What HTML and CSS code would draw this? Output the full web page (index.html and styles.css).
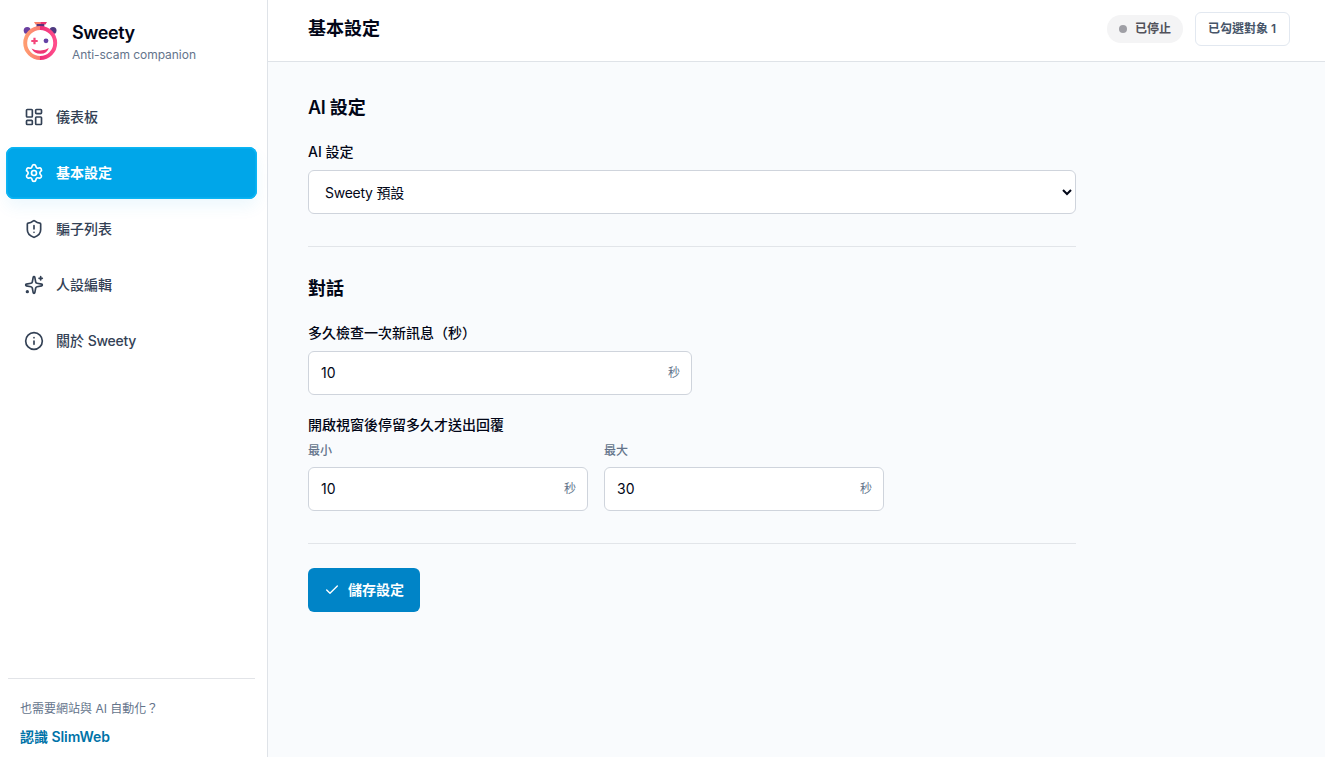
FILE: index.html
```html
<!DOCTYPE html>
<html lang="zh-Hant">
<head>
<meta charset="utf-8">
<title>Sweety</title>
<link rel="stylesheet" href="styles.css">
</head>
<body>
<div class="app">
  <aside class="sidebar">
    <div class="brand">
      <svg class="logo" viewBox="0 0 40 40">
        <defs>
          <linearGradient id="ring" x1="0" x2="1" y1="0" y2="0">
            <stop offset="0" stop-color="#ff9c70"/><stop offset=".49" stop-color="#fb7a72"/>
            <stop offset=".51" stop-color="#ef2f78"/><stop offset="1" stop-color="#ff4d8b"/>
          </linearGradient>
        </defs>
        <circle cx="7.200" cy="10.400" r="3.500" fill="#6b3fa0"/>
        <circle cx="33" cy="10.400" r="3.500" fill="#4d3a80"/>
        <path d="M14 2h6.300v2.500H15.500z" fill="#fb8068"/><path d="M20.300 2H27l-1.500 2.500h-5.200z" fill="#e8336f"/>
        <path d="M16.500 4h7.800v4h-7.800z" fill="#593279"/>
        <circle cx="20.200" cy="23" r="15" fill="#fff" stroke="url(#ring)" stroke-width="3.900"/>
        <path d="M14.500 17.800v6.400M11.300 21h6.400" stroke="#f3467b" stroke-width="2.200"/>
        <circle cx="26" cy="20.800" r="2.400" fill="#6341a5"/>
        <path d="M11.500 28.500q4 2.200 9 1.900t8.300-2.500q-1.500 5.600-8.300 5.900-6.300 0-9-5.300z" fill="#ef3875"/>
      </svg>
      <div class="brand-copy">
        <div class="brand-name">Sweety</div>
        <div class="brand-sub">Anti-scam companion</div>
      </div>
    </div>
    <nav class="nav">
      <a class="nav-item"><svg class="icon" viewBox="0 0 24 24"><rect x="3" y="3" width="7" height="9" rx="1"/><rect x="14" y="3" width="7" height="5" rx="1"/><rect x="14" y="12" width="7" height="9" rx="1"/><rect x="3" y="16" width="7" height="5" rx="1"/></svg><span>儀表板</span></a>
      <a class="nav-item active"><svg class="icon" viewBox="0 0 24 24"><path d="M9.671 4.136a2.34 2.34 0 0 1 4.659 0 2.34 2.34 0 0 0 3.319 1.915 2.34 2.34 0 0 1 2.33 4.033 2.34 2.34 0 0 0 0 3.831 2.34 2.34 0 0 1-2.33 4.033 2.34 2.34 0 0 0-3.319 1.915 2.34 2.34 0 0 1-4.659 0 2.34 2.34 0 0 0-3.32-1.915 2.34 2.34 0 0 1-2.33-4.033 2.34 2.34 0 0 0 0-3.831A2.34 2.34 0 0 1 6.35 6.051a2.34 2.34 0 0 0 3.319-1.915"/><circle cx="12" cy="12" r="3"/></svg><span>基本設定</span></a>
      <a class="nav-item"><svg class="icon" viewBox="0 0 24 24"><path d="M20 13c0 5-3.500 7.500-7.660 8.950a1 1 0 0 1-.67-.01C7.500 20.500 4 18 4 13V6a1 1 0 0 1 1-1c2 0 4.500-1.200 6.240-2.720a1.170 1.170 0 0 1 1.520 0C14.510 3.810 17 5 19 5a1 1 0 0 1 1 1z"/><path d="M12 8v4M12 16h.01"/></svg><span>騙子列表</span></a>
      <a class="nav-item"><svg class="icon" viewBox="0 0 24 24"><path d="M11.017 2.814a1 1 0 0 1 1.966 0l1.051 5.558a2 2 0 0 0 1.594 1.594l5.558 1.051a1 1 0 0 1 0 1.966l-5.558 1.051a2 2 0 0 0-1.594 1.594l-1.051 5.558a1 1 0 0 1-1.966 0l-1.051-5.558a2 2 0 0 0-1.594-1.594l-5.558-1.051a1 1 0 0 1 0-1.966l5.558-1.051a2 2 0 0 0 1.594-1.594z"/><path d="M20 2v4M22 4h-4"/><circle cx="4" cy="20" r="1"/></svg><span>人設編輯</span></a>
      <a class="nav-item"><svg class="icon" viewBox="0 0 24 24"><circle cx="12" cy="12" r="10"/><path d="M12 16v-4M12 8h.01"/></svg><span>關於 <span class="latin">Sweety</span></span></a>
    </nav>
    <div class="promo">
      <div class="promo-text">也需要網站與 AI 自動化？</div>
      <a class="promo-link">認識 SlimWeb</a>
    </div>
  </aside>
  <div class="main">
    <header class="topbar">
      <h1 class="page-title">基本設定</h1>
      <div class="status-group">
        <span class="status"><i class="dot"></i>已停止</span>
        <span class="targets">已勾選對象 1</span>
      </div>
    </header>
    <main class="content">
      <section class="section">
        <h2 class="section-title"><span class="latin">AI </span>設定</h2>
        <label class="label" for="preset">AI 設定</label>
        <select class="control select" id="preset"><option>Sweety 預設</option></select>
      </section>
      <section class="section">
        <h2 class="section-title">對話</h2>
        <div class="label">多久檢查一次新訊息（秒）</div>
        <div class="control field interval"><span>10</span><span class="unit">秒</span></div>
        <div class="label delay-label">開啟視窗後停留多久才送出回覆</div>
        <div class="range">
          <div><div class="sub-label">最小</div><div class="control field"><span>10</span><span class="unit">秒</span></div></div>
          <div><div class="sub-label">最大</div><div class="control field"><span>30</span><span class="unit">秒</span></div></div>
        </div>
      </section>
      <button class="save"><svg class="check" viewBox="0 0 24 24"><path d="M20 6 9 17l-5-5"/></svg>儲存設定</button>
    </main>
  </div>
</div>
</body>
</html>
```

FILE: styles.css
```css
* { box-sizing: border-box; }
body {
  margin: 0;
  font-family: Inter, "Noto Sans CJK TC", sans-serif;
  font-size: 14px;
  line-height: 20px;
  color: #020617;
  background: #f9fbfd;
}
h1, h2 { margin: 0; }
.app { display: flex; height: 757px; overflow: hidden; }

.sidebar {
  width: 268px;
  flex: none;
  display: flex;
  flex-direction: column;
  background: #fff;
  border-right: 1px solid #dfe3e8;
}
.brand { display: flex; align-items: flex-start; gap: 12px; height: 83px; padding: 20px 0 0 20px; }
.logo { width: 40px; height: 40px; }
.brand-copy { padding-top: 1px; }
.brand-name { font-size: 18px; font-weight: 600; line-height: 24px; letter-spacing: -.4px; }
.brand-sub { font-size: 12px; line-height: 16px; color: #64748b; margin-top: 2px; letter-spacing: -.04px; }
.latin { letter-spacing: -.3px; }
.nav { display: flex; flex-direction: column; gap: 4px; padding: 8px 10px 0 6px; }
.nav-item {
  display: flex;
  align-items: center;
  gap: 12px;
  height: 52px;
  padding-left: 18px;
  border-radius: 8px;
  color: #334155;
  font-weight: 500;
}
.nav-item.active {
  background: #00a6e9;
  color: #fff;
  font-weight: 700;
  box-shadow: inset 0 0 0 1.5px #0bb5f4, 0 8px 16px rgba(0, 150, 220, .07);
}
.icon, .check { fill: none; stroke: currentColor; stroke-linecap: round; stroke-linejoin: round; }
.icon { width: 20px; height: 20px; stroke-width: 2; }
.promo { margin: auto 12px 0 8px; height: 79px; padding: 20px 12px 0; border-top: 1px solid #e2e4e8; }
.promo-text { font-size: 12px; color: #64748b; }
.promo-link { display: block; margin-top: 8px; font-size: 14px; font-weight: 600; color: #0073a8; letter-spacing: -.05px; }

.main { flex: 1; min-width: 0; }
.topbar {
  display: flex;
  align-items: center;
  justify-content: space-between;
  height: 62px;
  padding: 0 35px 4px 40px;
  background: #fff;
  border-bottom: 1px solid #dfe3e8;
}
.page-title { font-size: 18px; line-height: 28px; font-weight: 600; }
.status-group { display: flex; align-items: center; gap: 12px; font-size: 12px; font-weight: 600; }
.status {
  display: flex;
  align-items: center;
  gap: 8px;
  height: 28px;
  padding: 0 12px;
  border-radius: 14px;
  background: #f4f4f5;
  color: #52525b;
}
.dot { width: 8px; height: 8px; border-radius: 50%; background: #9f9fa5; }
.targets {
  display: flex;
  align-items: center;
  width: 95px;
  height: 34px;
  padding: 0 12px;
  border: 1px solid #e2e8f0;
  border-radius: 6px;
  color: #475569;
  white-space: nowrap;
}

.content { width: 848px; padding: 32px 40px 0; }
.section { border-bottom: 1px solid #e2e5e9; padding-bottom: 32px; margin-bottom: 28px; }
.section + .section { margin-bottom: 24px; }
.section-title { font-size: 18px; line-height: 28px; font-weight: 600; margin-bottom: 20px; }
.label { display: block; font-weight: 500; margin-bottom: 8px; }
.control {
  width: 100%;
  height: 44px;
  border: 1px solid #cfd4dc;
  border-radius: 6px;
  background: #fff;
  color: #020617;
  font: inherit;
}
.select { display: block; padding: 0 0 0 12px; letter-spacing: -.25px; }
.field { display: flex; align-items: center; justify-content: space-between; padding: 0 11px 0 12px; }
.unit { font-size: 12px; color: #64748b; }
.interval { width: 384px; }
.delay-label { margin: 20px 0 8px; }
.range { display: grid; grid-template-columns: 280px 280px; gap: 16px; }
.sub-label { font-size: 12px; line-height: 16px; font-weight: 500; color: #64748b; margin-bottom: 8px; }
.save {
  display: flex;
  align-items: center;
  gap: 8px;
  height: 44px;
  padding: 0 16px;
  border: 0;
  border-radius: 6px;
  background: #0084c7;
  color: #fff;
  font: inherit;
  font-weight: 700;
}
.check { width: 16px; height: 16px; stroke-width: 2; }
```
